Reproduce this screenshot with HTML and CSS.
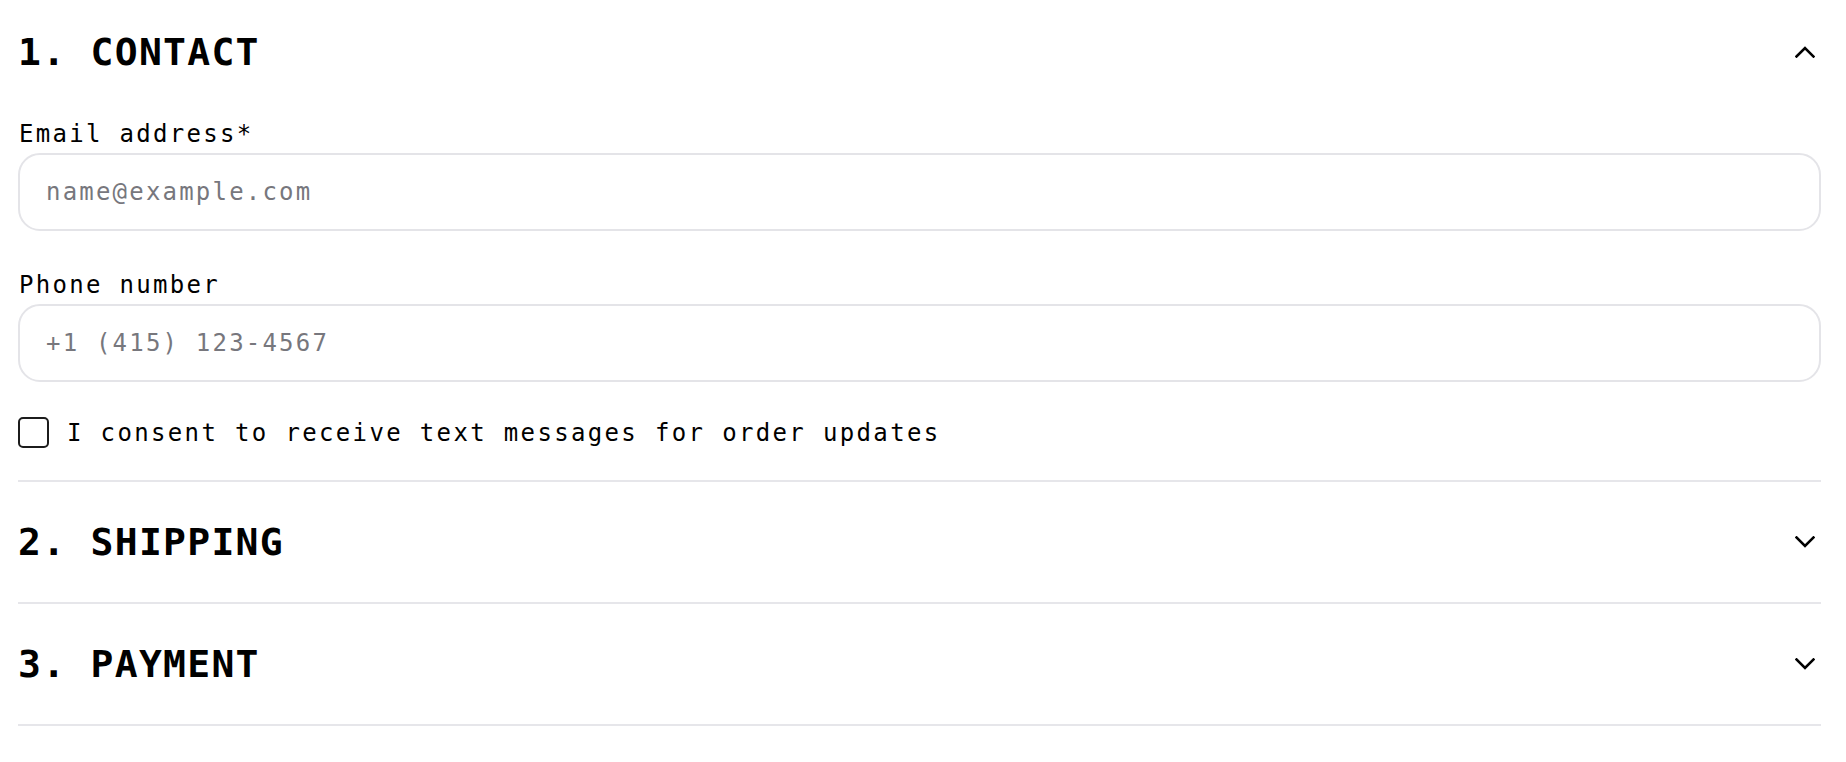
FILE: index.html
```html
<!DOCTYPE html>
<html lang="en">
<head>
<meta charset="utf-8">
<title>Checkout</title>
<link rel="stylesheet" href="styles.css">
</head>
<body>
<div class="checkout">
  <section class="step step-open">
    <div class="step-head step-head-first">
      <h2 class="step-title">1. CONTACT</h2>
      <svg class="chev" width="20" height="12" viewBox="0 0 20 12"><polyline points="1.5,10.5 10,2 18.5,10.5" fill="none" stroke="#000" stroke-width="2.6" stroke-linecap="square"/></svg>
    </div>
    <div class="step-body">
      <div class="field">
        <label class="field-label" for="email">Email address*</label>
        <input class="field-input" id="email" type="email" placeholder="name@example.com">
      </div>
      <div class="field">
        <label class="field-label" for="phone">Phone number</label>
        <input class="field-input" id="phone" type="tel" placeholder="+1 (415) 123-4567">
      </div>
      <label class="consent"><span class="box"></span><span class="consent-text">I consent to receive text messages for order updates</span></label>
    </div>
  </section>
  <section class="step">
    <div class="step-head">
      <h2 class="step-title">2. SHIPPING</h2>
      <svg class="chev" width="20" height="12" viewBox="0 0 20 12"><polyline points="1.5,1.5 10,10 18.5,1.5" fill="none" stroke="#000" stroke-width="2.6" stroke-linecap="square"/></svg>
    </div>
  </section>
  <section class="step">
    <div class="step-head">
      <h2 class="step-title">3. PAYMENT</h2>
      <svg class="chev" width="20" height="12" viewBox="0 0 20 12"><polyline points="1.5,1.5 10,10 18.5,1.5" fill="none" stroke="#000" stroke-width="2.6" stroke-linecap="square"/></svg>
    </div>
  </section>
</div>
</body>
</html>
```
FILE: styles.css
```css
* { box-sizing: border-box; }
html, body { margin: 0; padding: 0; background: #fff; }
body {
  font-family: "DejaVu Sans Mono", "Liberation Mono", monospace;
  color: #000;
}
.checkout {
  padding: 0 25px 0 18px;
}
.step {
  border-bottom: 2px solid #e6e6ea;
}
.step-head {
  display: flex;
  justify-content: space-between;
  align-items: center;
  padding: 37px 0 37px;
}
.step-head-first {
  padding: 29px 0 0;
}
.step-title {
  margin: 0;
  font-size: 38px;
  line-height: 46px;
  font-weight: bold;
  letter-spacing: 1.3px;
}
.chev {
  display: block;
  margin-right: 6px;
}
.step-body {
  padding: 45px 0 32px;
}
.field {
  display: flex;
  flex-direction: column;
  margin-bottom: 40px;
}
.field + .field { margin-bottom: 35px; }
.field-label {
  font-size: 24px;
  line-height: 28px;
  letter-spacing: 2.3px;
  margin-bottom: 5px;
  margin-left: 1px;
}
.field-input {
  height: 78px;
  border: 2px solid #e4e4e8;
  border-radius: 22px;
  padding: 0 26px;
  font-family: "DejaVu Sans Mono", "Liberation Mono", monospace;
  font-size: 24px;
  letter-spacing: 2.2px;
  color: #000;
  background: #fff;
  outline: none;
}
.field-input::placeholder {
  color: #77777d;
}
.consent {
  display: flex;
  align-items: center;
  gap: 18px;
}
.box {
  width: 31px;
  height: 31px;
  border: 2px solid #1c1c1c;
  border-radius: 5px;
  flex: none;
}
.consent-text {
  font-size: 24px;
  line-height: 28px;
  letter-spacing: 2.35px;
}
```
